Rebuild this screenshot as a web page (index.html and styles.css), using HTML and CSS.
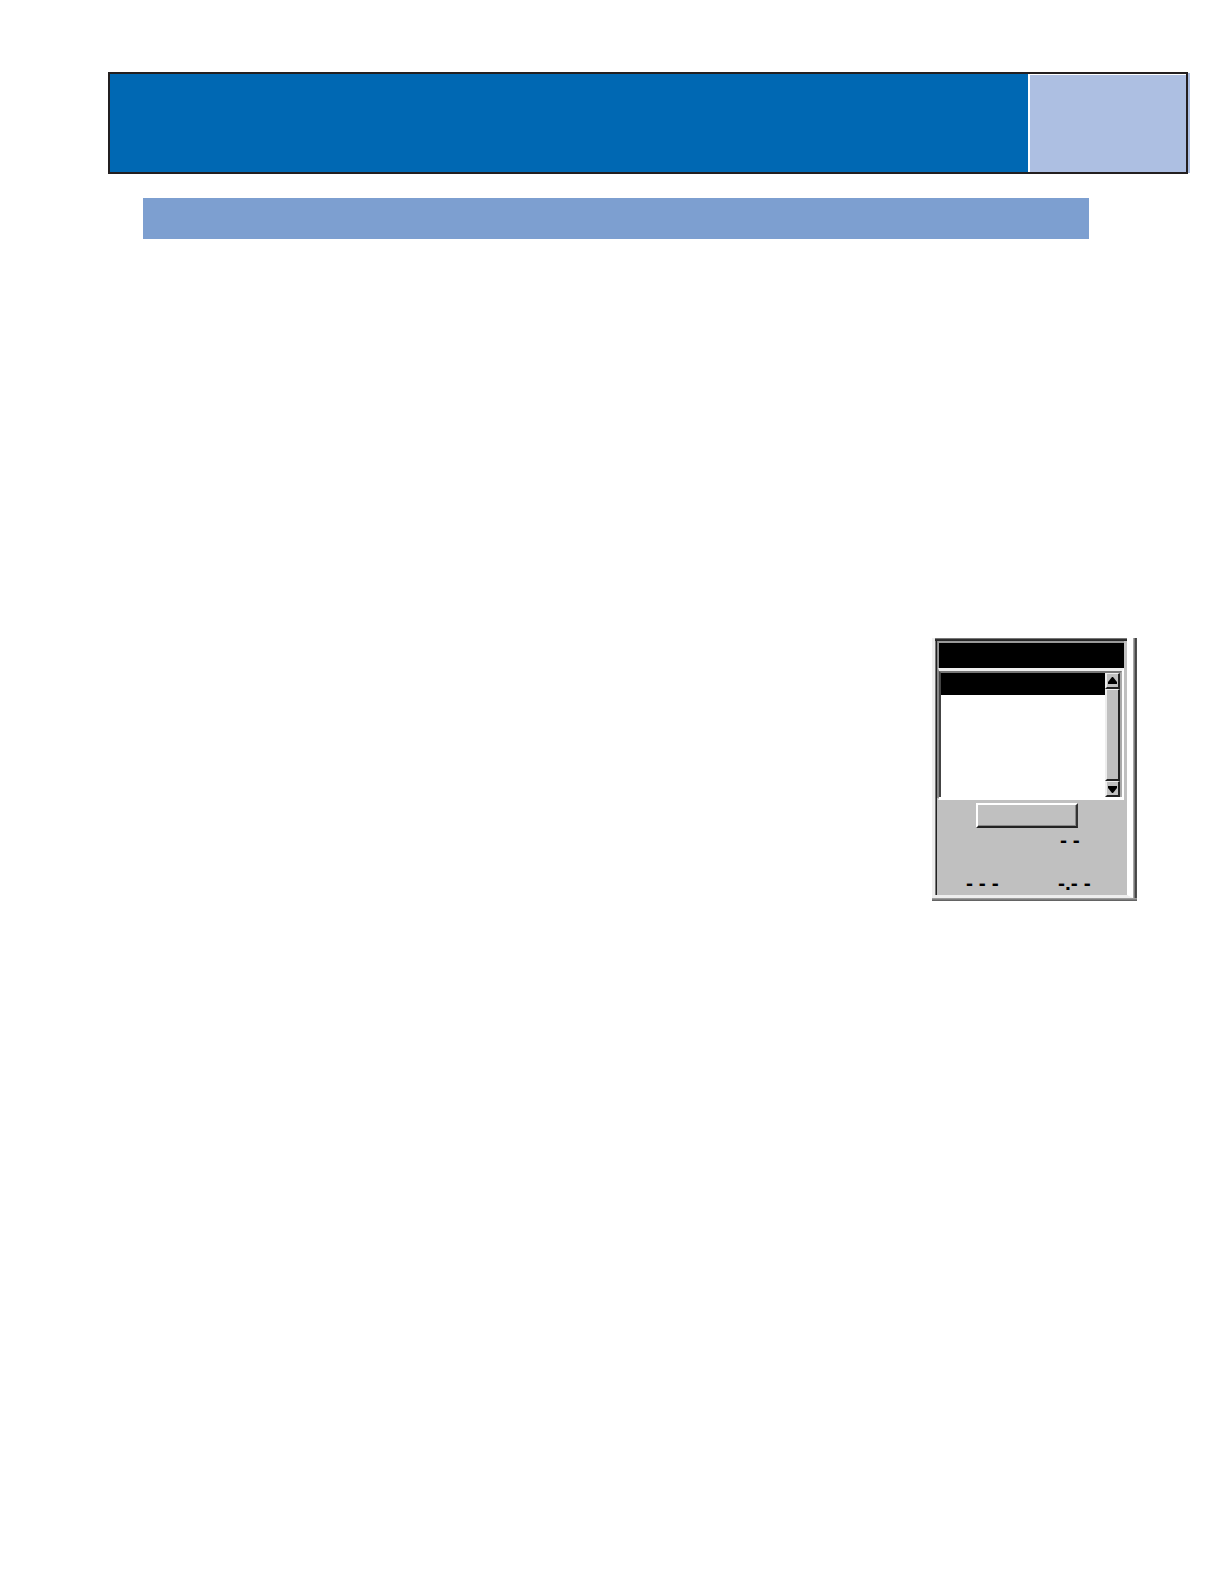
FILE: index.html
```html
<!DOCTYPE html>
<html lang="en">
<head>
<meta charset="utf-8">
<meta name="viewport" content="width=device-width, initial-scale=1">
<title>Terminal</title>
<link rel="stylesheet" href="styles.css">
</head>
<body>
<header class="banner">
  <div class="banner-main"></div>
  <div class="banner-side"></div>
</header>
<div class="section-bar"></div>
<main class="content">
  <section class="terminal">
    <div class="screen">
      <div class="display"></div>
      <div class="list">
        <ul class="items">
          <li class="selected"></li>
        </ul>
        <div class="scrollbar">
          <button class="arrow" type="button" aria-label="Scroll up"><svg width="9" height="8" viewBox="0 0 9 8"><path d="M4 0h1l4 5v2H0V5z"/></svg></button>
          <div class="thumb"></div>
          <button class="arrow" type="button" aria-label="Scroll down"><svg width="9" height="8" viewBox="0 0 9 8"><path d="M0 1h9v2L5 8H4L0 3z"/></svg></button>
        </div>
      </div>
      <button class="action" type="button" aria-label="Select"></button>
      <div class="total">- -</div>
      <div class="readouts">
        <span>- - -</span>
        <span>-.- -</span>
      </div>
    </div>
  </section>
</main>
</body>
</html>
```
FILE: styles.css
```css
* {
  box-sizing: border-box;
}

body {
  margin: 0;
  padding: 72px 36px 72px 108px;
  background: #fff;
  font-family: "Liberation Sans", Arial, sans-serif;
}

.banner {
  display: flex;
  height: 102px;
  border: 2px solid #231f20;
  background: #0068b3;
  box-shadow: 3px 0 0 -1px #adbfe2;
}

.banner-main {
  flex: 1;
}

.banner-side {
  width: 158px;
  border-top: 1px solid #fff;
  border-left: 2px solid #fff;
  background: #adbfe2;
}

.section-bar {
  height: 41px;
  margin: 24px 99px 0 35px;
  background: #7d9fd0;
}

.content {
  display: flex;
  justify-content: flex-end;
  padding: 399px 51px 0 0;
}

.terminal {
  width: 205px;
  padding: 0 4px 3px 0;
  background: linear-gradient(#aaa, #555) bottom / 100% 3px no-repeat,
    linear-gradient(to right, #bbb, #777 40%, #444 60%, #555) right / 4px 100% no-repeat;
}

.screen {
  display: flex;
  flex-direction: column;
  height: 260px;
  padding: 3px 3px 0 3px;
  border-style: solid;
  border-color: #eee #fff #eee #eee;
  border-width: 0 6px 3px 3px;
  background: linear-gradient(#777, #777) top / 100% 1px no-repeat,
    linear-gradient(#333, #222) 0 1px / 100% 2px no-repeat,
    linear-gradient(to right, #777 1px, #222 1px, #222 2px, #888 2px, #888 3px, transparent 3px) top / 100% 160px no-repeat,
    linear-gradient(to right, #777 1px, #222 1px, #222 2px, transparent 2px),
    #c0c0c0;
}

.display {
  height: 27px;
  border-top: 2px solid #999;
  border-left: 1px solid #999;
  background: #000;
}

.list {
  display: flex;
  height: 132px;
  border-style: solid;
  border-color: #eee #fff #fff #888;
  border-width: 3px 2px 3px 1px;
  background: #fff;
}

.items {
  flex: 1;
  padding: 0;
  margin: 0;
  border-left: 2px solid #444;
  border-top: 2px solid #777;
  list-style: none;
}

.selected {
  height: 22px;
  background: #000;
}

.scrollbar {
  display: flex;
  flex-direction: column;
  width: 17px;
  border-top: 2px solid #777;
  border-right: 2px solid #aaa;
  background: #c0c0c0;
}

.arrow,
.thumb {
  border-style: solid;
  border-color: #eee #222 #222 #eee;
  border-width: 1px 2px 2px 2px;
  background: #c0c0c0;
}

.arrow {
  display: grid;
  place-items: center;
  height: 16px;
  padding: 0;
}

.thumb {
  flex: 1;
}

.action {
  width: 102px;
  height: 25px;
  margin: 3px 0 0 38px;
  padding: 0;
  border-style: solid;
  border-color: #fff #333 #222 #fff;
  border-width: 2px;
  background: #c0c0c0;
  box-shadow: inset -1px -1px #888;
}

.total,
.readouts {
  color: #000;
  font-size: 21px;
  font-weight: bold;
  line-height: 24px;
}

.total {
  margin-left: 122px;
}

.readouts {
  display: grid;
  grid-template-columns: 92px auto;
  margin: 19px 0 0 28px;
}
```
